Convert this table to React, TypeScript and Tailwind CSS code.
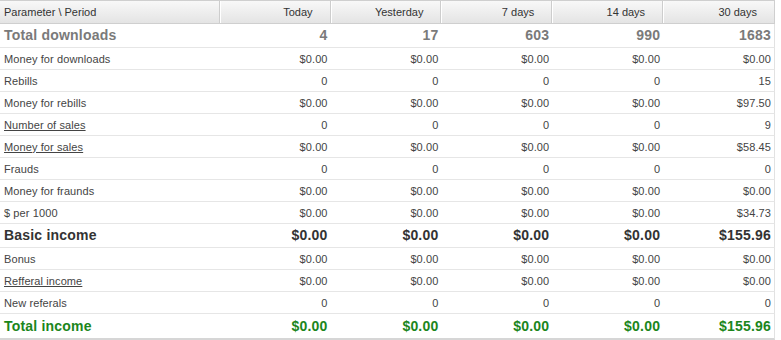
const periods = ["Today", "Yesterday", "7 days", "14 days", "30 days"];

type Row = {
  label: string;
  values: string[];
  kind?: "gray" | "dark" | "green";
  link?: boolean;
  h: string;
};

const rows: Row[] = [
  { label: "Total downloads", values: ["4", "17", "603", "990", "1683"], kind: "gray", h: "h-[24px]" },
  { label: "Money for downloads", values: ["$0.00", "$0.00", "$0.00", "$0.00", "$0.00"], h: "h-[22px]" },
  { label: "Rebills", values: ["0", "0", "0", "0", "15"], h: "h-[22px]" },
  { label: "Money for rebills", values: ["$0.00", "$0.00", "$0.00", "$0.00", "$97.50"], h: "h-[22px]" },
  { label: "Number of sales", values: ["0", "0", "0", "0", "9"], link: true, h: "h-[22px]" },
  { label: "Money for sales", values: ["$0.00", "$0.00", "$0.00", "$0.00", "$58.45"], link: true, h: "h-[22px]" },
  { label: "Frauds", values: ["0", "0", "0", "0", "0"], h: "h-[22px]" },
  { label: "Money for fraunds", values: ["$0.00", "$0.00", "$0.00", "$0.00", "$0.00"], h: "h-[22px]" },
  { label: "$ per 1000", values: ["$0.00", "$0.00", "$0.00", "$0.00", "$34.73"], h: "h-[22px]" },
  { label: "Basic income", values: ["$0.00", "$0.00", "$0.00", "$0.00", "$155.96"], kind: "dark", h: "h-[24px]" },
  { label: "Bonus", values: ["$0.00", "$0.00", "$0.00", "$0.00", "$0.00"], h: "h-[22px]" },
  { label: "Refferal income", values: ["$0.00", "$0.00", "$0.00", "$0.00", "$0.00"], link: true, h: "h-[22px]" },
  { label: "New referals", values: ["0", "0", "0", "0", "0"], h: "h-[22px]" },
];

function textClass(kind?: Row["kind"]) {
  if (kind === "gray") return "text-[14px] font-bold text-[#7a7a7a] tracking-[0.2px]";
  if (kind === "dark") return "text-[14px] font-bold text-[#333333] tracking-[0.2px]";
  if (kind === "green") return "text-[14px] font-bold text-[#1c861c] tracking-[0.2px]";
  return "text-[11px] text-[#444444] pt-[1px] tracking-[0.1px]";
}

function DataRow({ row, last }: { row: Row; last?: boolean }) {
  const tc = textClass(row.kind);
  return (
    <div
      className={`flex ${row.h} border-r border-[#e2e2e2] ${
        last ? "border-b-2 border-b-[#d6d6d6]" : "border-b border-b-[#e6e6e6]"
      }`}
    >
      <div className={`w-[220px] flex items-center pl-[4px] ${tc}`}>
        <span className={row.link ? "underline" : ""}>{row.label}</span>
      </div>
      {row.values.map((v, i) => (
        <div key={i} className={`w-[111px] flex items-center justify-end pr-[3px] ${tc}`}>
          {v}
        </div>
      ))}
    </div>
  );
}

export default function App() {
  return (
    <div className="w-[781px] h-[340px] bg-white overflow-hidden font-['Liberation_Sans',Arial,sans-serif]">
      <div className="w-[775px]">
        <div className="flex h-[24px] border-t border-b border-[#cfcfcf] border-r bg-gradient-to-b from-[#f8f8f8] to-[#e4e4e4] text-[11px] text-[#333333]">
          <div className="w-[220px] flex items-center pl-[4px] pt-[1px] border-r border-r-[#cdcdcd]">Parameter \ Period</div>
          {periods.map((p, i) => (
            <div
              key={p}
              className={`w-[111px] flex items-center justify-end pr-[17px] pt-[1px] border-l border-l-white ${
                i < periods.length - 1 ? "border-r border-r-[#cdcdcd]" : ""
              }`}
            >
              {p}
            </div>
          ))}
        </div>
        {rows.map((r) => (
          <DataRow key={r.label} row={r} />
        ))}
        <DataRow
          row={{
            label: "Total income",
            values: ["$0.00", "$0.00", "$0.00", "$0.00", "$155.96"],
            kind: "green",
            h: "h-[26px]",
          }}
          last
        />
      </div>
    </div>
  );
}
